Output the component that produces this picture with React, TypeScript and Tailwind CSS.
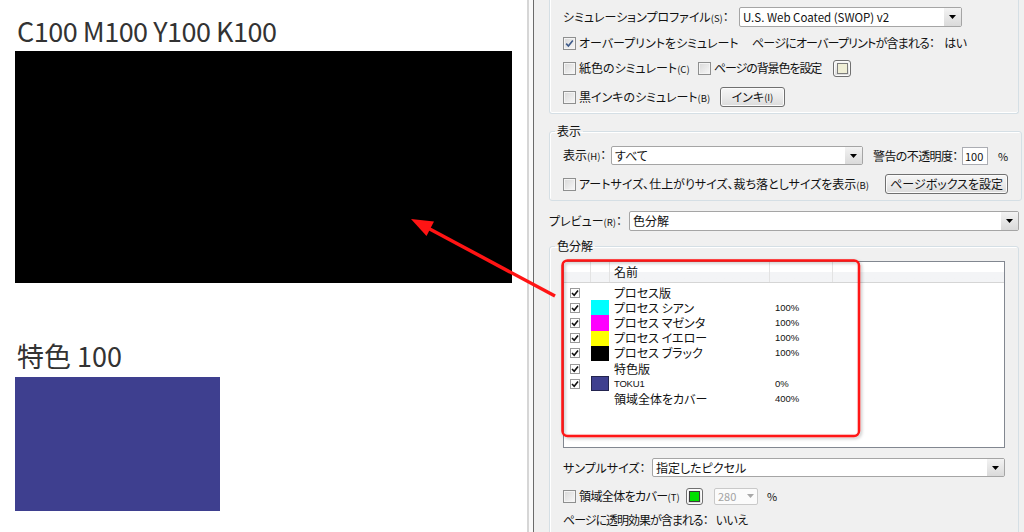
import React from "react";

function Check({ checked = false }: { checked?: boolean }) {
  return (
    <span className="inline-flex h-[13px] w-[13px] shrink-0 items-center justify-center border border-[#8e8f8f] bg-white">
      <span className="flex h-[11px] w-[11px] items-center justify-center bg-linear-to-br from-[#d8d8d8] to-[#f8f8f8] shadow-[inset_0_0_0_1px_#f4f4f4]">
        {checked && (
          <svg width="9" height="9" viewBox="0 0 9 9">
            <path d="M1.2 4.6 L3.4 7 L7.8 1.6" fill="none" stroke="#3d5a8a" strokeWidth="1.6" />
          </svg>
        )}
      </span>
    </span>
  );
}

function ListCheck() {
  return (
    <span className="inline-flex h-[10px] w-[10px] shrink-0 items-center justify-center border border-[#9a9a9a] bg-white">
      <svg width="8" height="8" viewBox="0 0 8 8">
        <path d="M1 4 L3.2 6.3 L7 1.5" fill="none" stroke="#111" strokeWidth="1.6" />
      </svg>
    </span>
  );
}

function Btn({ children, className = "" }: { children: React.ReactNode; className?: string }) {
  return (
    <span
      className={`inline-flex shrink-0 items-center justify-center rounded-[3px] border border-[#707070] bg-linear-to-b from-[#f6f6f6] via-[#ebebeb] to-[#dbdbdb] shadow-[inset_0_0_0_1px_#fbfbfb] ${className}`}
    >
      {children}
    </span>
  );
}

function Arrow({ disabled = false }: { disabled?: boolean }) {
  return (
    <svg width="7" height="4" viewBox="0 0 7 4">
      <path d="M0 0 H7 L3.5 4 Z" fill={disabled ? "#a8a8a8" : "#000"} />
    </svg>
  );
}

function Select({ text, className = "", latin = false }: { text: string; className?: string; latin?: boolean }) {
  return (
    <div className={`flex shrink-0 items-stretch rounded-[2px] border border-[#a5a5a5] bg-white ${className}`}>
      <span className={`flex flex-1 items-center overflow-hidden whitespace-nowrap pl-[3px] ${latin ? "text-[11.5px]" : ""}`}>
        {text}
      </span>
      <span className="flex w-[17px] items-center justify-center bg-linear-to-b from-[#f3f3f3] to-[#dadada]">
        <Arrow />
      </span>
    </div>
  );
}

function K({ children }: { children: React.ReactNode }) {
  return <span className="text-[9.5px] tracking-normal">{children}</span>;
}

type Row = { sw: string; name: string; pct: string; check: boolean; latin?: boolean };

const rows: Row[] = [
  { check: true, sw: "", name: "プロセス版", pct: "" },
  { check: true, sw: "bg-[#00ffff]", name: "プロセス シアン", pct: "100%" },
  { check: true, sw: "bg-[#ff00ff]", name: "プロセス マゼンタ", pct: "100%" },
  { check: true, sw: "bg-[#ffff00]", name: "プロセス イエロー", pct: "100%" },
  { check: true, sw: "bg-[#000000]", name: "プロセス ブラック", pct: "100%" },
  { check: true, sw: "", name: "特色版", pct: "" },
  { check: true, sw: "bg-[#3e3f8f] border border-[#23244f]", name: "TOKU1", pct: "0%", latin: true },
  { check: false, sw: "", name: "領域全体をカバー", pct: "400%" },
];

export default function App() {
  return (
    <div className="relative flex h-[532px] w-[1024px] overflow-hidden bg-white font-['Noto_Sans_CJK_JP','Noto_Sans',sans-serif]">
      {/* Left artwork */}
      <div className="flex w-[527px] shrink-0 flex-col bg-white pl-[15px]">
        <div className="mt-[17px] h-[28px] pl-[2px] text-[27px] leading-[28px] tracking-[-0.5px] text-[#333]">
          C100 M100 Y100 K100
        </div>
        <div className="mt-[6px] h-[232px] w-[497px] bg-black" />
        <div className="mt-[59px] h-[28px] pl-[2px] text-[27px] leading-[28px] text-[#333]">特色 100</div>
        <div className="mt-[7px] h-[134px] w-[205px] bg-[#3e3f8f]" />
      </div>

      {/* Divider */}
      <div className="w-[2px] shrink-0 bg-[#d6d6d6]" />
      <div className="w-[4px] shrink-0 bg-[#fafafa]" />
      <div className="w-[1px] shrink-0 bg-[#6b6b6b]" />

      {/* Panel */}
      <div className="flex min-w-0 flex-1 flex-col whitespace-nowrap bg-[#f0f0f0] pl-[15px] pr-[5px] text-[12px] leading-[14px] text-[#111] [font-feature-settings:'palt']">
        {/* Group 1 (top clipped) */}
        <div className="flex h-[114px] shrink-0 flex-col rounded-b-[3px] border border-t-0 border-[#d5dfe5] pl-[13px] pr-[13px] pt-[7px] shadow-[inset_1px_0_0_#fff,inset_0_-1px_0_#fff]">
          <div className="flex h-[20px] items-center">
            <span className="w-[176px] shrink-0">
              シミュレーションプロファイル<K>(S)</K>：
            </span>
            <Select text="U.S. Web Coated (SWOP) v2" className="h-[20px] w-[223px]" latin />
          </div>
          <div className="mt-[8px] flex h-[16px] items-center">
            <span className="flex w-[189px] shrink-0 items-center gap-[3px]">
              <Check checked />
              <span>オーバープリントをシミュレート</span>
            </span>
            <span className="tracking-[-0.8px]">ページにオーバープリントが含まれる：</span>
            <span className="ml-[10px] tracking-[-0.5px]">はい</span>
          </div>
          <div className="mt-[8px] flex h-[18px] items-center">
            <span className="flex w-[135px] shrink-0 items-center gap-[3px]">
              <Check />
              <span>
                紙色のシミュレート<K>(C)</K>
              </span>
            </span>
            <span className="flex w-[135px] shrink-0 items-center gap-[3px]">
              <Check />
              <span className="tracking-[-1.1px]">ページの背景色を設定</span>
            </span>
            <Btn className="h-[17px] w-[18px]">
              <span className="h-[11px] w-[11px] border border-[#7d7d7d] bg-[#efeed6]" />
            </Btn>
          </div>
          <div className="mt-[10px] flex h-[20px] items-center">
            <span className="flex w-[157px] shrink-0 items-center gap-[3px]">
              <Check />
              <span>
                黒インキのシミュレート<K>(B)</K>
              </span>
            </span>
            <Btn className="h-[20px] w-[65px]">
              インキ<K>(I)</K>
            </Btn>
          </div>
        </div>

        {/* Group 2: 表示 */}
        <fieldset className="mt-[10px] shrink-0 rounded-[3px] border border-[#d5dfe5] pb-[6px] shadow-[inset_1px_1px_0_#fff]">
          <legend className="ml-[5px] px-[2px] leading-[14px]">表示</legend>
          <div className="flex flex-col px-[13px]">
            <div className="mt-[8px] flex h-[19px] items-center">
              <span className="w-[48px] shrink-0">
                表示<K>(H)</K>：
              </span>
              <Select text="すべて" className="h-[19px] w-[252px]" />
              <span className="ml-[10px] w-[89px] shrink-0 tracking-[-0.6px]">警告の不透明度：</span>
              <span className="flex h-[18px] w-[26px] shrink-0 items-center border border-[#abadb3] bg-white pl-[2px] text-[11px]">
                100
              </span>
              <span className="ml-[10px] text-[11px]">%</span>
            </div>
            <div className="mt-[9px] flex h-[20px] items-center">
              <span className="flex items-center gap-[3px]">
                <Check />
                <span>
                  アートサイズ、仕上がりサイズ、裁ち落としサイズを表示<K>(B)</K>
                </span>
              </span>
              <Btn className="ml-auto h-[20px] w-[123px]">ページボックスを設定</Btn>
            </div>
          </div>
        </fieldset>

        {/* Preview */}
        <div className="mt-[10px] flex h-[20px] shrink-0 items-center">
          <span className="w-[80px] shrink-0">
            プレビュー<K>(R)</K>：
          </span>
          <Select text="色分解" className="h-[20px] flex-1" />
        </div>

        {/* Group 3: 色分解 */}
        <fieldset className="mt-[8px] shrink-0 rounded-[3px] border border-[#d5dfe5] pb-[20px] shadow-[inset_1px_1px_0_#fff]">
          <legend className="ml-[5px] px-[2px] leading-[14px]">色分解</legend>
          <div className="flex flex-col px-[13px]">
            <div className="mt-[8px] flex h-[187px] flex-col border border-[#828790] bg-white">
              <div className="flex h-[21px] shrink-0 border-b border-[#d5d5d5] bg-linear-to-b from-white from-50% to-[#f3f4f6] to-50%">
                <div className="w-[27px] border-r border-[#e3e3e3]" />
                <div className="w-[19px] border-r border-[#e3e3e3]" />
                <div className="flex w-[160px] items-center border-r border-[#e3e3e3] pl-[4px]">名前</div>
                <div className="w-[63px] border-r border-[#e3e3e3]" />
                <div className="flex-1" />
              </div>
              <div className="flex flex-col pt-[2px]">
                {rows.map((r, i) => (
                  <div key={i} className="flex h-[15.2px] items-center">
                    <div className="flex w-[27px] shrink-0 items-center pl-[6px]">{r.check && <ListCheck />}</div>
                    <div className="flex h-full w-[19px] shrink-0 items-stretch">
                      {r.sw && <span className={`w-[18px] ${r.sw}`} />}
                    </div>
                    <div
                      className={`w-[160px] shrink-0 pl-[4px] ${
                        r.latin ? "font-['Liberation_Sans',sans-serif] text-[9.5px] tracking-[-0.2px]" : ""
                      }`}
                    >
                      {r.name}
                    </div>
                    <div className="pl-[5px] font-['Liberation_Sans',sans-serif] text-[9.5px]">{r.pct}</div>
                  </div>
                ))}
              </div>
            </div>

            <div className="mt-[10px] flex h-[19px] items-center">
              <span className="w-[89px] shrink-0">サンプルサイズ：</span>
              <Select text="指定したピクセル" className="h-[19px] flex-1" />
            </div>

            <div className="mt-[10px] flex h-[18px] items-center">
              <span className="flex w-[123px] shrink-0 items-center gap-[3px]">
                <Check />
                <span className="tracking-[-0.6px]">
                  領域全体をカバー<K>(T)</K>
                </span>
              </span>
              <Btn className="h-[17px] w-[17px]">
                <span className="h-[11px] w-[11px] border border-[#3a3a3a] bg-[#00e000]" />
              </Btn>
              <span className="ml-[11px] flex h-[17px] w-[44px] shrink-0 items-stretch rounded-[2px] border border-[#c9c9c9] bg-[#fbfbfb]">
                <span className="flex flex-1 items-center pl-[3px] text-[11px] text-[#a3a3a3]">280</span>
                <span className="flex w-[14px] items-center justify-center">
                  <Arrow disabled />
                </span>
              </span>
              <span className="ml-[9px] text-[11px]">%</span>
            </div>

            <div className="mt-[8px] flex h-[14px] items-center">
              <span className="tracking-[-1px]">ページに透明効果が含まれる：</span>
              <span className="ml-[8px] tracking-[-0.5px]">いいえ</span>
            </div>
          </div>
        </fieldset>
      </div>

      {/* Annotation overlay */}
      <svg className="pointer-events-none absolute left-0 top-0" width="1024" height="532" viewBox="0 0 1024 532">
        <defs>
          <filter id="sh" x="-10%" y="-10%" width="120%" height="120%">
            <feDropShadow dx="1.5" dy="1.5" stdDeviation="1.5" floodColor="#000" floodOpacity="0.25" />
          </filter>
        </defs>
        <rect x="562.5" y="260.5" width="296.5" height="175.5" rx="5" fill="none" stroke="#ff1414" strokeWidth="2.5" filter="url(#sh)" />
        <line x1="555" y1="296" x2="426" y2="227" stroke="#ff1414" strokeWidth="3.5" />
        <polygon points="411,219 434,221.5 426.5,236" fill="#ff1414" />
      </svg>
    </div>
  );
}
